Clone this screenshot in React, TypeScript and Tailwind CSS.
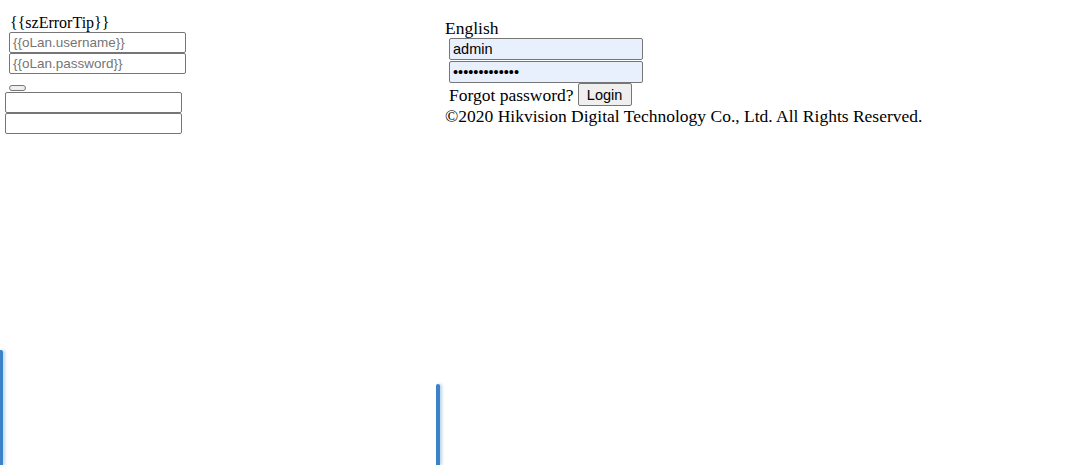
import React from "react";

const serif = "font-['Liberation_Serif',serif]";
const sans = "font-['Liberation_Sans',Arial,sans-serif]";

export default function App() {
  return (
    <div className={`flex h-[465px] w-[1078px] overflow-hidden bg-white text-black ${serif}`}>
      {/* Left: unrendered template */}
      <div className="flex w-[436px] shrink-0 flex-col">
        <div className="pt-[13px] pl-[10px] text-[16px] leading-[19px]">{"{{szErrorTip}}"}</div>
        <input
          placeholder="{{oLan.username}}"
          className={`ml-[9px] h-[21px] w-[177px] rounded-[2px] border border-[#767676] px-[3px] text-[13.5px] outline-none placeholder:text-[#757575] ${sans}`}
        />
        <input
          placeholder="{{oLan.password}}"
          className={`ml-[9px] h-[21px] w-[177px] rounded-[2px] border border-[#767676] px-[3px] text-[13.5px] outline-none placeholder:text-[#757575] ${sans}`}
        />
        <button className="mt-[11px] ml-[9px] h-[6px] w-[17px] rounded-[3px] border border-[#767676] bg-[#efefef]" />
        <input className="mt-[1px] ml-[5px] h-[21px] w-[177px] rounded-[2px] border border-[#767676] outline-none" />
        <input className="ml-[5px] h-[21px] w-[177px] rounded-[2px] border border-[#767676] outline-none" />
        <div className="mt-auto h-[115px] w-[3px] rounded-tr-[2px] bg-[#3b82c8] shadow-[2px_0_3px_rgba(59,130,200,0.35)]" />
      </div>

      {/* Right: login form */}
      <div className="flex flex-1 flex-col">
        <div className="pl-[9px] text-[17.5px]">
          <div className="pt-[18px] leading-[20px]">English</div>
          <input
            defaultValue="admin"
            className={`ml-[4px] block h-[22px] w-[194px] rounded-[2px] border border-[#767676] bg-[#e8f0fe] px-[3px] text-[14.5px] outline-none ${sans}`}
          />
          <input
            type="password"
            defaultValue="abcdef1234567"
            className={`ml-[4px] mt-[1px] block h-[22px] w-[194px] rounded-[2px] border border-[#767676] bg-[#e8f0fe] px-[3px] text-[14.5px] outline-none ${sans}`}
          />
          <div className="ml-[4px] flex h-[23px] items-center gap-[4px] leading-[20px]">
            <span>Forgot password?</span>
            <button className={`h-[23px] w-[54px] rounded-[2px] border border-[#767676] bg-[#efefef] text-[14.5px] ${sans}`}>
              Login
            </button>
          </div>
          <div className="leading-[20px]">©2020 Hikvision Digital Technology Co., Ltd. All Rights Reserved.</div>
        </div>
        <div className="mt-auto h-[81px] w-[4px] rounded-t-[2px] bg-[#3b82c8] shadow-[2px_0_3px_rgba(59,130,200,0.35)]" />
      </div>
    </div>
  );
}
